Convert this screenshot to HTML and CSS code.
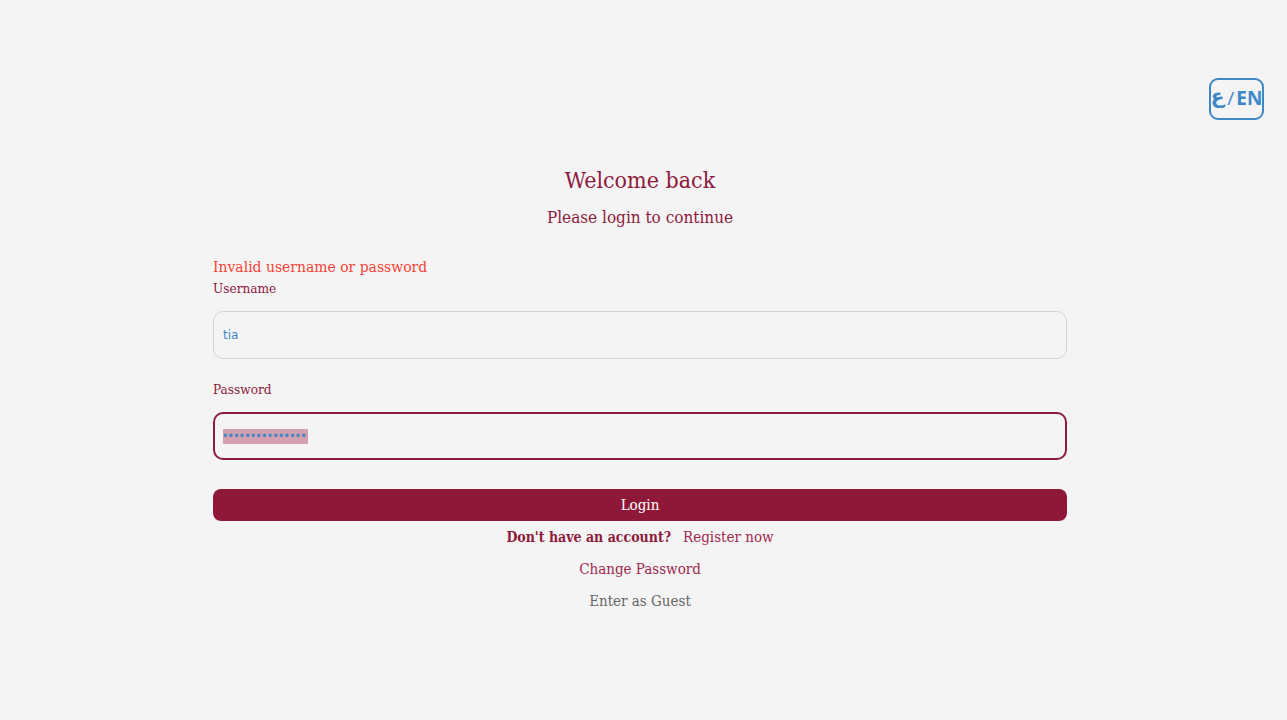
FILE: index.html
```html
<!DOCTYPE html>
<html lang="en">
<head>
<meta charset="utf-8">
<title>Login</title>
<link rel="stylesheet" href="styles.css">
</head>
<body>
<div class="page">
  <header class="topbar">
    <button class="lang-btn" type="button"><span class="ar">ع</span><span class="slash">/</span>EN</button>
  </header>
  <main class="login">
    <h1 class="title">Welcome back</h1>
    <p class="subtitle">Please login to continue</p>
    <form class="form">
      <div class="error">Invalid username or password</div>
      <label class="label" for="username">Username</label>
      <input class="field" id="username" type="text" value="tia">
      <label class="label label-pw" for="password">Password</label>
      <div class="field field-focus" id="password"><span class="sel">•••••••••••••••</span></div>
      <button class="submit" type="button">Login</button>
    </form>
    <div class="links">
      <p class="register"><strong>Don't have an account?</strong><a href="#">Register now</a></p>
      <p class="link-row"><a class="change" href="#">Change Password</a></p>
      <p class="link-row"><a class="guest" href="#">Enter as Guest</a></p>
    </div>
  </main>
</div>
</body>
</html>
```
FILE: styles.css
```css
html, body {
  margin: 0;
  padding: 0;
  background: #f4f4f4;
}
body {
  font-family: "DejaVu Serif", "Liberation Serif", serif;
  font-stretch: condensed;
  color: #8e1a3c;
}
.page {
  width: 1280px;
  min-height: 720px;
}
.topbar {
  display: flex;
  justify-content: flex-end;
  padding: 78px 16px 0 0;
  height: 42px;
}
.lang-btn {
  width: 55px;
  height: 42px;
  border: 2px solid #3f88c8;
  border-radius: 9px;
  background: #f4f4f4;
  color: #3f88c8;
  font-family: "Open Sans", "DejaVu Sans", sans-serif;
  font-weight: 700;
  font-size: 19px;
  padding: 0 0 1px 0;
  display: flex;
  align-items: center;
  justify-content: center;
  line-height: 1;
}
.lang-btn .ar {
  font-family: "DejaVu Sans", sans-serif;
  font-weight: 700;
  font-size: 20px;
  position: relative;
  top: -3px;
}
.lang-btn .slash {
  font-weight: 400;
  margin: 0 2px 0 3px;
}
.login {
  width: 854px;
  margin: 0 auto;
  padding-top: 42px;
}
.title {
  margin: 0;
  text-align: center;
  font-size: 23px;
  font-weight: 400;
  line-height: 36px;
}
.subtitle {
  margin: 0;
  text-align: center;
  font-size: 17px;
  line-height: 38px;
}
.form {
  display: flex;
  flex-direction: column;
  padding-top: 20px;
}
.error {
  color: #f44336;
  font-size: 15.5px;
  line-height: 22px;
}
.label {
  font-size: 13.5px;
  line-height: 20px;
  margin-bottom: 13px;
}
.label-pw {
  margin-top: 20px;
}
.field {
  box-sizing: border-box;
  height: 48px;
  width: 100%;
  border: 1px solid #d3d3d5;
  border-radius: 10px;
  background: #f4f4f4;
  padding: 0 9px;
  font-family: "DejaVu Sans", sans-serif;
  font-size: 12px;
  color: #3f88c8;
  outline: none;
  display: flex;
  align-items: center;
}
.field-focus {
  border: 2px solid #8e1a3c;
  padding: 0 8px;
}
.sel {
  background: #d3a0b0;
  color: #3f88c8;
  font-family: "Liberation Sans", sans-serif;
  font-size: 12px;
  letter-spacing: 1.4px;
  line-height: 15px;
  padding-right: 1px;
}
.submit {
  margin-top: 29px;
  height: 32px;
  border: none;
  border-radius: 8px;
  background: #8f1839;
  color: #ffffff;
  font-family: inherit;
  font-stretch: condensed;
  font-size: 15px;
  padding: 0;
}
.links {
  text-align: center;
  padding-top: 5px;
}
.links p {
  margin: 0;
  line-height: 22px;
  font-size: 15px;
}
.link-row {
  margin-top: 10px !important;
}
.register strong {
  font-weight: 700;
  font-size: 14px;
  color: #8e1a3c;
}
.register a {
  margin-left: 12px;
  color: #a0294f;
  text-decoration: none;
}
.change {
  color: #a0294f;
  text-decoration: none;
}
.guest {
  color: #666666;
  text-decoration: none;
}
```
